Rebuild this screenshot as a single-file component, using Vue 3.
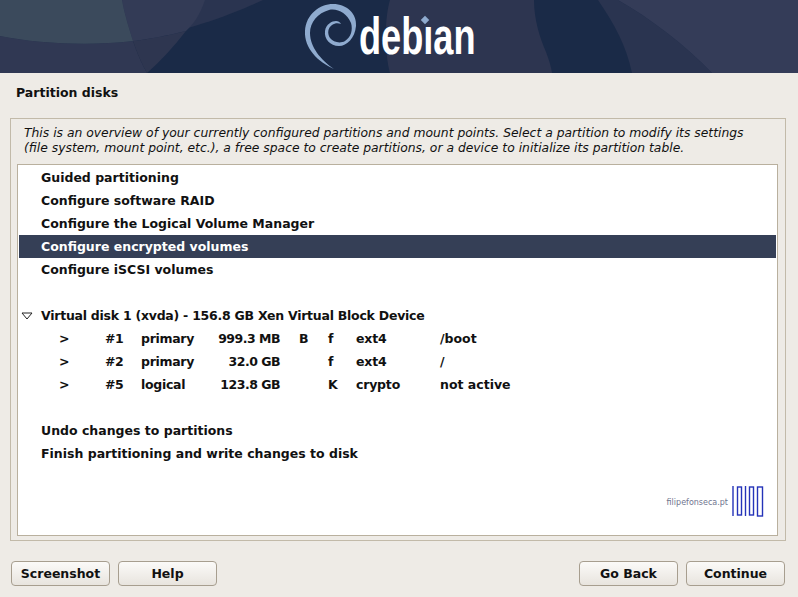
<script setup>
const menuTop = ['Guided partitioning', 'Configure software RAID', 'Configure the Logical Volume Manager', 'Configure encrypted volumes', 'Configure iSCSI volumes']
const parts = [
  { n: '#1', type: 'primary', size: '999.3 MB', boot: 'B', fl: 'f', fs: 'ext4', mount: '/boot' },
  { n: '#2', type: 'primary', size: '32.0 GB', boot: '', fl: 'f', fs: 'ext4', mount: '/' },
  { n: '#5', type: 'logical', size: '123.8 GB', boot: '', fl: 'K', fs: 'crypto', mount: 'not active' },
]
const menuBottom = ['Undo changes to partitions', 'Finish partitioning and write changes to disk']
</script>

<template>
  <div class="page">
    <header class="banner">
      <svg class="banner-bg" width="798" height="73" viewBox="0 0 798 73">
        <path fill="#2a3450" d="M0 0H263C230 15 190 30 133 41C90 46 40 44 0 36Z" />
        <path fill="#303853" d="M0 36C40 44 90 46 133 41C138 55 142 64 147 73H0Z" />
        <path fill="#2e3650" d="M133 41C150 39 170 35 186 31C175 45 160 62 147 73C142 64 138 55 133 41Z" />
        <path fill="#333b56" d="M122 0H205C200 15 194 23 186 31C165 36 150 39 133 41C128 25 124 12 122 0Z" />
        <path fill="#3b4a5c" d="M0 0H122C124 12 128 25 133 41C90 46 40 44 0 36Z" />
        <path fill="#2d3550" d="M390 0H534C534 20 540 38 546 52C549 60 551 66 552 73H390C385 55 384 20 390 0Z" />
        <path fill="#2a3450" d="M598 0H618C650 18 685 45 712 73H632C626 45 615 25 598 0Z" />
        <path fill="#343c58" d="M618 0H798V73H712C685 45 650 18 618 0Z" />
      </svg>
      <svg class="swirl" width="54" height="70" viewBox="304 2 54 70">
        <path fill="#8fabcf" d="M334 69C318 62 304 48 305 31C306 14 320 4 333 4C347 4 357 14 356 26C355 38 347 46 339 46C330 46 324 39 325 31C326 24 332 21 336 21C338 21 340 22 341 24C338 23 335 23 332 25C328 28 327 33 330 38C333 42 340 44 345 41C351 37 353 30 351 23C347 13 337 8 329 10C318 13 310 22 310 33C310 47 321 60 334 69Z" />
      </svg>
      <div class="wordmark"><span class="wordmark-text">debıan</span><i class="dot"></i></div>
    </header>

    <h1 class="title">Partition disks</h1>

    <section class="frame">
      <p class="intro">This is an overview of your currently configured partitions and mount points. Select a partition to modify its settings (file system, mount point, etc.), a free space to create partitions, or a device to initialize its partition table.</p>
      <div class="list">
        <div v-for="(m, i) in menuTop" :key="m" class="row" :class="{ selected: i === 3 }">{{ m }}</div>
        <div class="row"></div>
        <div class="row disk">
          <svg class="arrow" width="12" height="8" viewBox="0 0 12 8"><path d="M1 1H11L6 7Z" fill="none" stroke="#222" /></svg>
          Virtual disk 1 (xvda) - 156.8 GB Xen Virtual Block Device
        </div>
        <div v-for="p in parts" :key="p.n" class="row part">
          <span class="c-arrow">&gt;</span>
          <span class="c-n">{{ p.n }}</span>
          <span class="c-type">{{ p.type }}</span>
          <span class="c-size">{{ p.size }}</span>
          <span class="c-boot">{{ p.boot }}</span>
          <span class="c-fl">{{ p.fl }}</span>
          <span class="c-fs">{{ p.fs }}</span>
          <span class="c-mount">{{ p.mount }}</span>
        </div>
        <div class="row"></div>
        <div v-for="m in menuBottom" :key="m" class="row">{{ m }}</div>
        <div class="brand">
          <span class="brand-text">filipefonseca.pt</span>
          <svg width="32" height="31" viewBox="0 0 32 31" fill="none" stroke="#2433b8" stroke-width="1.4">
            <path d="M1 0V30" />
            <rect x="5.5" y="1" width="4" height="28" />
            <path d="M13.5 0V30" />
            <rect x="17.5" y="1" width="4" height="28" />
            <rect x="25.5" y="1" width="5" height="29" />
          </svg>
        </div>
      </div>
    </section>

    <footer class="buttons">
      <button class="btn">Screenshot</button>
      <button class="btn">Help</button>
      <span class="spacer"></span>
      <button class="btn">Go Back</button>
      <button class="btn">Continue</button>
    </footer>
  </div>
</template>

<style>
html, body { margin: 0; background: #eeebe6; }
</style>

<style scoped>
.page {
  width: 798px;
  height: 597px;
  overflow: hidden;
  background: #eeebe6;
  color: #111;
  font: bold 12.5px "DejaVu Sans", sans-serif;
  display: flex;
  flex-direction: column;
}
.banner {
  position: relative;
  height: 73px;
  flex: none;
  background: #1a2a47;
  display: flex;
  align-items: flex-start;
  padding-left: 304px;
  box-sizing: border-box;
}
.banner-bg { position: absolute; left: 0; top: 0; }
.swirl { position: relative; margin-top: 2px; flex: none; }
.wordmark {
  position: relative;
  width: 116px;
  height: 73px;
  margin-left: 1px;
}
.wordmark-text {
  position: absolute;
  left: 0;
  top: 0;
  transform-origin: 0 0;
  transform: scaleX(0.695);
  font: bold 52px/73px "Liberation Sans", sans-serif;
  color: #fff;
  white-space: nowrap;
}
.dot {
  position: absolute;
  left: 63px;
  top: 17px;
  width: 6px;
  height: 6px;
  background: #8fabcf;
  transform: rotate(45deg);
}
.title {
  margin: 0;
  height: 45px;
  padding: 12px 0 0 16px;
  box-sizing: border-box;
  font-size: 12.5px;
  line-height: 15px;
  font-weight: bold;
  flex: none;
}
.frame {
  margin: 0 0 0 10px;
  width: 776px;
  height: 423px;
  box-sizing: border-box;
  border: 1px solid #c2baa9;
  padding: 7px 7px 4px 6px;
  flex: none;
  display: flex;
  flex-direction: column;
}
.intro {
  margin: 0 0 8px 7px;
  font-size: 12.35px;
  font-weight: normal;
  font-style: italic;
  line-height: 15px;
  width: 740px;
}
.list {
  position: relative;
  flex: 1;
  background: #fff;
  border: 1px solid #b9b09e;
  padding: 1px;
}
.row {
  height: 23px;
  line-height: 23px;
  padding-left: 22px;
  white-space: nowrap;
  position: relative;
}
.selected { background: #353f56; color: #fff; }
.disk { letter-spacing: -0.25px; }
.arrow { position: absolute; left: 2px; top: 8px; }
.part { display: flex; }
.part span { flex: none; white-space: pre; }
.c-arrow { width: 64px; padding-left: 18px; box-sizing: border-box; }
.part .c-n { width: 36px; letter-spacing: -0.5px; }
.part .c-type { width: 77px; letter-spacing: -0.3px; }
.part .c-size { width: 62px; text-align: right; letter-spacing: -0.5px; }
.c-boot { width: 48px; padding-left: 19px; box-sizing: border-box; }
.c-fl { width: 28px; }
.part .c-fs { width: 84px; letter-spacing: -0.2px; }
.brand {
  position: absolute;
  right: 13px;
  bottom: 18px;
  display: flex;
  align-items: center;
  gap: 4px;
}
.brand-text {
  font: normal 8px "DejaVu Sans", sans-serif;
  color: #70758f;
  margin-top: 2px;
}
.buttons {
  display: flex;
  gap: 8px;
  padding: 20px 13px 0 11px;
}
.spacer { flex: 1; }
.btn {
  width: 99px;
  height: 25px;
  padding: 0;
  font: bold 12.5px "DejaVu Sans", sans-serif;
  color: #111;
  background: linear-gradient(#fbfaf8, #e8e4de);
  border: 1px solid #a79e8f;
  border-radius: 4px;
}
</style>
